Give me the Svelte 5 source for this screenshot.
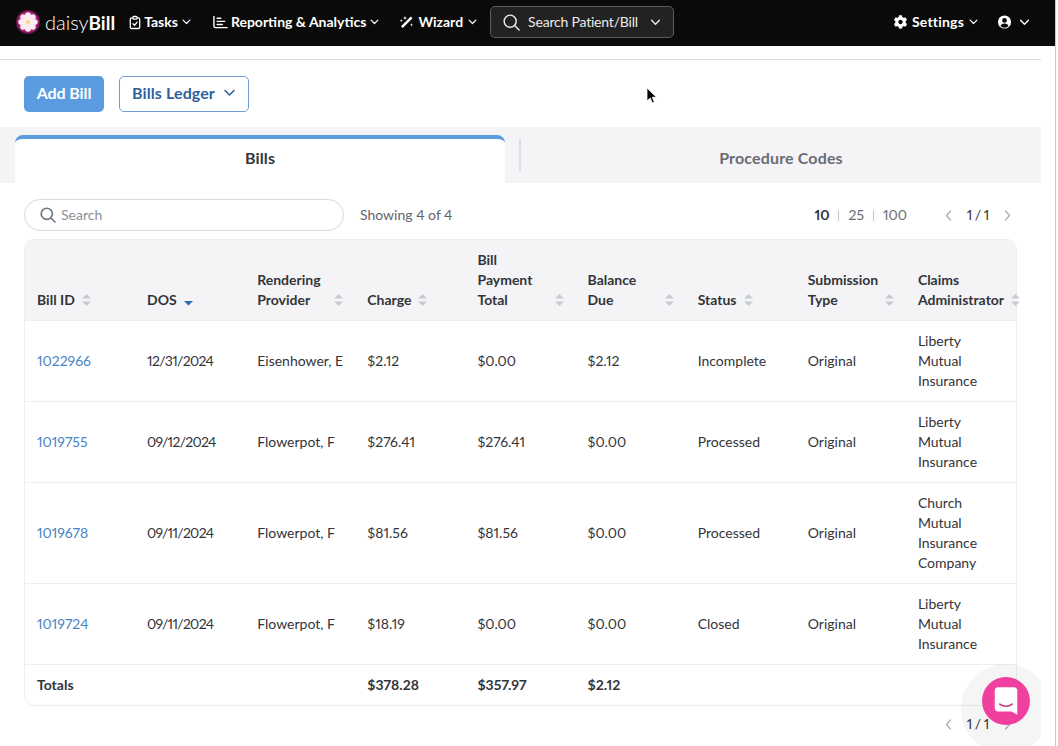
<script>
	const headers = [
		['Bill ID'],
		['DOS'],
		['Rendering', 'Provider'],
		['Charge'],
		['Bill', 'Payment', 'Total'],
		['Balance', 'Due'],
		['Status'],
		['Submission', 'Type'],
		['Claims', 'Administrator']
	];
	const bills = [
		{ id: '1022966', dos: '12/31/2024', provider: 'Eisenhower, E', charge: '$2.12', paid: '$0.00', due: '$2.12', status: 'Incomplete', admin: ['Liberty', 'Mutual', 'Insurance'] },
		{ id: '1019755', dos: '09/12/2024', provider: 'Flowerpot, F', charge: '$276.41', paid: '$276.41', due: '$0.00', status: 'Processed', admin: ['Liberty', 'Mutual', 'Insurance'] },
		{ id: '1019678', dos: '09/11/2024', provider: 'Flowerpot, F', charge: '$81.56', paid: '$81.56', due: '$0.00', status: 'Processed', admin: ['Church', 'Mutual', 'Insurance', 'Company'] },
		{ id: '1019724', dos: '09/11/2024', provider: 'Flowerpot, F', charge: '$18.19', paid: '$0.00', due: '$0.00', status: 'Closed', admin: ['Liberty', 'Mutual', 'Insurance'] }
	];
	const petals = [0, 45, 90, 135, 180, 225, 270, 315];
	const gear = 'M487.4 315.7l-42.6-24.6c4.3-23.2 4.3-47 0-70.2l42.6-24.6c4.9-2.8 7.1-8.6 5.5-14-11.1-35.6-30-67.8-54.7-94.6-3.8-4.1-10-5.1-14.8-2.3L380.8 110c-17.9-15.4-38.5-27.3-60.8-35.1V25.8c0-5.6-3.9-10.5-9.4-11.7-36.7-8.2-74.3-7.8-109.2 0-5.5 1.2-9.4 6.1-9.4 11.7V75c-22.2 7.9-42.8 19.8-60.8 35.1L88.7 85.5c-4.9-2.8-11-1.9-14.8 2.3-24.7 26.7-43.6 58.9-54.7 94.6-1.7 5.4.6 11.2 5.5 14L67.3 221c-4.3 23.2-4.3 47 0 70.2l-42.6 24.6c-4.9 2.8-7.1 8.6-5.5 14 11.1 35.6 30 67.8 54.7 94.6 3.8 4.1 10 5.1 14.8 2.3l42.6-24.6c17.9 15.4 38.5 27.3 60.8 35.1v49.2c0 5.6 3.9 10.5 9.4 11.7 36.7 8.2 74.3 7.8 109.2 0 5.5-1.2 9.4-6.1 9.4-11.7v-49.2c22.2-7.9 42.8-19.8 60.8-35.1l42.6 24.6c4.9 2.8 11 1.9 14.8-2.3 24.7-26.7 43.6-58.9 54.7-94.6 1.5-5.5-.7-11.3-5.6-14.1zM256 336c-44.1 0-80-35.9-80-80s35.9-80 80-80 80 35.9 80 80-35.9 80-80 80z';
</script>

{#snippet chevron(cls)}
	<svg class={cls} viewBox="0 0 12 8" fill="none" stroke="currentColor" stroke-width="1.6" stroke-linecap="round" stroke-linejoin="round"><path d="M1.5 1.5 6 6l4.5-4.5" /></svg>
{/snippet}

{#snippet sorter(active)}
	<svg class="sort" viewBox="0 0 11 14">
		{#if active}
			<path d="M1 8h9l-4.500 4.500z" fill="#2f6cb3" />
		{:else}
			<path d="M5.500 1 10 5.600H1zM1 8.400h9L5.500 13z" fill="#c9cbd1" />
		{/if}
	</svg>
{/snippet}

{#snippet pager()}
	<div class="pager">
		<svg class="arrow" viewBox="0 0 7 11" fill="none" stroke="currentColor" stroke-width="1.200" stroke-linecap="round" stroke-linejoin="round"><path d="M5.500 1 1.500 5.500l4 4.500" /></svg>
		<span class="count">1 / 1</span>
		<svg class="arrow" viewBox="0 0 7 11" fill="none" stroke="currentColor" stroke-width="1.200" stroke-linecap="round" stroke-linejoin="round"><path d="M1.500 1l4 4.500-4 4.500" /></svg>
	</div>
{/snippet}

<div class="window">
	<header class="nav">
		<div class="logo">
			<svg class="daisy" viewBox="0 0 24 24">
				<defs>
					<radialGradient id="rim">
						<stop offset="0.65" stop-color="#d92f8f" />
						<stop offset="1" stop-color="#5a1240" />
					</radialGradient>
				</defs>
				<circle cx="12" cy="12" r="12" fill="url(#rim)" />
				{#each petals as a}
					<ellipse cx="12" cy="6.600" rx="3.100" ry="4.400" fill="#fdeaf3" transform="rotate({a} 12 12)" />
				{/each}
				<circle cx="12" cy="12" r="2" fill="#f6d77e" />
			</svg>
			<span class="brand">daisy<b>Bill</b></span>
		</div>
		<a class="item tasks">
			<svg class="ic" viewBox="0 0 14 16" fill="none" stroke="currentColor" stroke-width="1.500" stroke-linejoin="round" stroke-linecap="round"><rect x="1.500" y="2.600" width="11" height="12.400" rx="1.600" /><rect x="4.600" y="1" width="4.800" height="3" rx="1" fill="#0a0a0a" /><path d="m4.600 9.400 1.800 1.800 3.200-3.600" /></svg>
			Tasks {@render chevron('chev')}
		</a>
		<a class="item reports">
			<svg class="ic wide" viewBox="0 0 16 14" fill="none" stroke="currentColor" stroke-width="1.500" stroke-linecap="round"><path d="M1 1v10.200c0 1 .6 1.800 1.800 1.800H15" /><path d="M4.400 3h4M4.400 6.300h8M4.400 9.600h5.500" /></svg>
			Reporting &amp; Analytics {@render chevron('chev')}
		</a>
		<a class="item wizard">
			<svg class="ic wide" viewBox="0 0 16 15" fill="currentColor"><path d="M12.600 1.600 14.400 3.400 4 13.900 2.100 12z" /><path d="M6.400 1 7 2.600l1.600.5L7 3.700 6.400 5.300 5.800 3.700 4.200 3.100 5.800 2.600zM2.400 4.200l.5 1.300 1.300.5-1.300.5-.5 1.300-.5-1.300L.6 6l1.300-.5zM13.400 8.800l.5 1.300 1.300.5-1.300.5-.5 1.300-.5-1.300-1.300-.5 1.300-.5z" /></svg>
			Wizard {@render chevron('chev')}
		</a>
		<button class="patient">
			<svg class="mag" viewBox="0 0 18 18" fill="none" stroke="currentColor" stroke-width="1.500" stroke-linecap="round"><circle cx="7.600" cy="7.600" r="6.400" /><path d="m12.300 12.300 4.700 4.700" /></svg>
			<span>Search Patient/Bill</span>
			{@render chevron('chev big')}
		</button>
		<a class="item settings">
			<svg class="ic wide" viewBox="0 0 512 512" fill="currentColor"><path d={gear} /></svg>
			Settings {@render chevron('chev')}
		</a>
		<a class="item user">
			<svg class="ic wide" viewBox="0 0 16 16"><circle cx="8" cy="8" r="7.500" fill="currentColor" /><circle cx="8" cy="6.200" r="2.700" fill="#0a0a0a" /><path d="M3.400 12.600c.8-2 2.400-2.900 4.600-2.900s3.800.9 4.600 2.900c-1.200 1.200-2.800 1.900-4.600 1.900s-3.400-.7-4.600-1.900z" fill="#0a0a0a" /></svg>
			{@render chevron('chev big')}
		</a>
	</header>

	<main class="page">
		<div class="rule"></div>
		<div class="actions">
			<button class="add">Add Bill</button>
			<button class="ledger">Bills Ledger {@render chevron('chev large')}</button>
		</div>

		<div class="tabs">
			<div class="tab active">Bills</div>
			<div class="tab-sep"></div>
			<div class="tab">Procedure Codes</div>
		</div>

		<div class="filters">
			<div class="search">
				<svg class="search-ic" viewBox="0 0 16 16" fill="none" stroke="#6d7280" stroke-width="1.600" stroke-linecap="round"><circle cx="6.800" cy="6.800" r="5.600" /><path d="m11 11 4 4" /></svg>
				<span>Search</span>
			</div>
			<span class="showing">Showing 4 of 4</span>
			<div class="sizes"><b>10</b><i></i>25<i></i>100</div>
			{@render pager()}
		</div>

		<div class="table-box">
			<table>
				<thead>
					<tr>
						{#each headers as lines, i}
							<th>
								<div class="th">
									<span>{#each lines as line}{line}<br />{/each}</span>
									{@render sorter(i === 1)}
								</div>
							</th>
						{/each}
					</tr>
				</thead>
				<tbody>
					{#each bills as bill}
						<tr>
							<td class="link">{bill.id}</td>
							<td class="date">{bill.dos}</td>
							<td>{bill.provider}</td>
							<td>{bill.charge}</td>
							<td>{bill.paid}</td>
							<td>{bill.due}</td>
							<td>{bill.status}</td>
							<td>Original</td>
							<td>{#each bill.admin as line}{line}<br />{/each}</td>
						</tr>
					{/each}
				</tbody>
				<tfoot>
					<tr>
						<td>Totals</td>
						<td></td>
						<td></td>
						<td>$378.28</td>
						<td>$357.97</td>
						<td>$2.12</td>
						<td></td>
						<td></td>
						<td></td>
					</tr>
				</tfoot>
			</table>
		</div>

		<div class="bottom">
			{@render pager()}
		</div>

		<div class="halo"></div>
		<div class="chat">
			<svg viewBox="0 0 24 24"><path d="M3 3.500C3 2.100 4.100 1 5.500 1h13C19.900 1 21 2.100 21 3.500V23l-4.500-2.700H5.500C4.100 20.300 3 19.200 3 17.800z" fill="#fff" /><path d="M7 14.500c3 2 7 2 10 0" fill="none" stroke="#c2337f" stroke-width="1.300" stroke-linecap="round" /></svg>
		</div>
	</main>

	<svg class="cursor" viewBox="0 0 12 18"><path d="M1 1v13l3.200-3 2.200 5 2-.9-2.200-4.900h4.300z" fill="#000" stroke="#fff" stroke-width="0.800" /></svg>
</div>

<style>
	:global(body) {
		background: #fff;
		overflow: hidden;
	}
	.window {
		position: relative;
		width: 1055px;
		height: 746px;
		overflow: hidden;
		border-right: 1px solid #c9c9c9;
		font-family: Lato, "Liberation Sans", sans-serif;
		font-size: 14px;
		line-height: 20px;
		color: #33343a;
		font-variant-numeric: proportional-nums;
	}
	.nav {
		display: flex;
		align-items: center;
		box-sizing: border-box;
		height: 46px;
		padding: 0 0 2px 16px;
		background: #0a0a0a;
		color: #fff;
	}
	.logo {
		display: flex;
		align-items: center;
		gap: 5px;
	}
	.daisy {
		width: 24px;
		height: 24px;
	}
	.brand {
		font-size: 20px;
		font-weight: 300;
	}
	.brand b {
		font-size: 19px;
		font-weight: 700;
	}
	.item {
		display: flex;
		align-items: center;
		gap: 3px;
		font-size: 14px;
		font-weight: 700;
		white-space: nowrap;
	}
	.tasks {
		margin-left: 14px;
	}
	.reports {
		margin-left: 22px;
	}
	.wizard {
		margin-left: 20px;
		gap: 4px;
	}
	.settings {
		margin-left: auto;
		gap: 4px;
		letter-spacing: 0.2px;
	}
	.user {
		margin-left: 19px;
		margin-right: 25px;
		gap: 6px;
	}
	.ic {
		width: 12px;
		height: 15px;
	}
	.ic.wide {
		width: 15px;
		height: 14px;
	}
	.chev {
		width: 9px;
		height: 6px;
		margin-left: 1px;
	}
	.chev.big {
		width: 11px;
		height: 7px;
	}
	.chev.large {
		width: 13px;
		height: 8px;
	}
	.patient {
		display: flex;
		align-items: center;
		box-sizing: border-box;
		width: 184px;
		height: 32px;
		margin-left: 13px;
		padding: 0 12px;
		background: #222;
		border: 1px solid #5c5c5c;
		border-radius: 5px;
		color: #ececec;
		font: inherit;
		font-size: 14px;
		letter-spacing: -0.2px;
	}
	.mag {
		width: 17px;
		height: 17px;
		margin-right: 8px;
	}
	.patient .chev {
		margin-left: auto;
	}
	.page {
		position: relative;
		width: 1041px;
		height: 700px;
		background: #fff;
		overflow: hidden;
	}
	.rule {
		height: 1px;
		margin-top: 13px;
		background: #dcdcdc;
	}
	.actions {
		display: flex;
		gap: 15px;
		padding: 16px 24px 15px;
	}
	.actions button {
		height: 36px;
		padding-bottom: 3px;
		border-radius: 5px;
		font: inherit;
		font-size: 16px;
		font-weight: 700;
	}
	.add {
		width: 80px;
		background: #5b9be0;
		border: none;
		color: #fff;
		letter-spacing: -0.1px;
	}
	.ledger {
		display: flex;
		align-items: center;
		justify-content: center;
		gap: 7px;
		width: 130px;
		background: #fff;
		border: 1px solid #6f9bcf;
		color: #2f5f9e;
		letter-spacing: 0.1px;
	}
	.tabs {
		display: flex;
		align-items: flex-end;
		height: 56px;
		padding-left: 15px;
		background: #f4f4f6;
		font-size: 16px;
		font-weight: 700;
		letter-spacing: 0.15px;
		color: #6a6c75;
	}
	.tab {
		flex: 1;
		height: 48px;
		line-height: 46px;
		text-align: center;
	}
	.tab.active {
		flex: none;
		box-sizing: border-box;
		width: 490px;
		line-height: 38px;
		background: #fff;
		border-top: 4px solid #5b9be0;
		border-radius: 8px 8px 0 0;
		color: #33343a;
	}
	.tab-sep {
		align-self: flex-start;
		width: 2px;
		height: 32px;
		margin: 12px 0 0 14px;
		background: #dfe0e5;
	}
	.filters {
		display: flex;
		align-items: center;
		height: 32px;
		margin: 16px 30px 8px 24px;
	}
	.search {
		display: flex;
		align-items: center;
		gap: 5px;
		width: 320px;
		height: 32px;
		box-sizing: border-box;
		padding-left: 15px;
		border: 1px solid #d8d9dd;
		border-radius: 16px;
		color: #8d8f98;
	}
	.search-ic {
		width: 16px;
		height: 16px;
	}
	.showing {
		margin-left: 16px;
		color: #63656e;
	}
	.sizes {
		display: flex;
		align-items: center;
		margin-left: auto;
		color: #6a6c75;
	}
	.sizes b {
		font-weight: 700;
		color: #33343a;
	}
	.sizes i {
		width: 1px;
		height: 11px;
		margin: 0 9px;
		background: #c5c6cc;
	}
	.pager {
		display: flex;
		align-items: center;
		justify-content: space-between;
		width: 66px;
		margin-left: 38px;
	}
	.arrow {
		width: 7px;
		height: 11px;
		color: #a9abb2;
	}
	.count {
		color: #33343a;
		word-spacing: -1px;
	}
	.table-box {
		width: 993px;
		box-sizing: border-box;
		margin: 0 24px;
		border: 1px solid #eeeef0;
		border-radius: 10px;
	}
	table {
		width: 100%;
		table-layout: fixed;
		border-collapse: collapse;
	}
	th {
		vertical-align: bottom;
		text-align: left;
		padding: 10px 0 10px 12px;
		background: #f4f4f6;
		font-weight: 700;
	}
	th:first-child {
		border-top-left-radius: 10px;
	}
	th:last-child {
		border-top-right-radius: 10px;
	}
	.th {
		display: flex;
		align-items: flex-end;
		justify-content: space-between;
		padding-right: 11px;
		white-space: nowrap;
	}
	th:nth-child(1) .th,
	th:nth-child(2) .th,
	th:nth-child(4) .th,
	th:nth-child(7) .th,
	th:last-child .th {
		justify-content: flex-start;
		gap: 6px;
		padding-right: 0;
	}
	.sort {
		flex: none;
		width: 11px;
		height: 14px;
		margin-bottom: 3px;
	}
	td {
		padding: 10px 0 10px 12px;
		border-top: 1px solid #eeeef0;
		white-space: nowrap;
	}
	.link {
		color: #4a83c4;
	}
	.date {
		letter-spacing: -0.7px;
	}
	tfoot td {
		font-weight: 700;
	}
	.bottom {
		display: flex;
		justify-content: flex-end;
		padding: 8px 30px 0 0;
	}
	.halo {
		position: absolute;
		left: 961px;
		top: 618px;
		width: 90px;
		height: 90px;
		border-radius: 50%;
		background: rgba(0, 0, 0, 0.04);
	}
	.chat {
		position: absolute;
		left: 982px;
		top: 631px;
		display: flex;
		align-items: center;
		justify-content: center;
		width: 48px;
		height: 48px;
		border-radius: 50%;
		background: #f0409f;
	}
	.chat svg {
		width: 30px;
		height: 30px;
	}
	.cursor {
		position: absolute;
		left: 646px;
		top: 87px;
		width: 12px;
		height: 18px;
	}
</style>
